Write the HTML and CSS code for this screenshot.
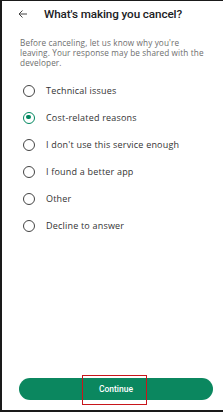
FILE: index.html
```html
<!DOCTYPE html>
<html>
<head>
<meta charset="utf-8">
<link rel="stylesheet" href="styles.css">
</head>
<body>
<div class="screen">
  <div class="header">
    <svg class="back" width="12" height="12" viewBox="0 0 24 24"><path d="M20 12H5M11 5l-7 7 7 7" fill="none" stroke="#444" stroke-width="2"/></svg>
    <div class="title">What's making you cancel?</div>
  </div>
  <p class="desc">Before canceling, let us know why you're leaving. Your response may be shared with the developer.</p>
  <div class="options">
    <div class="opt"><span class="radio"></span><span class="label">Technical issues</span></div>
    <div class="opt"><span class="radio on"></span><span class="label">Cost-related reasons</span></div>
    <div class="opt"><span class="radio"></span><span class="label">I don't use this service enough</span></div>
    <div class="opt"><span class="radio"></span><span class="label">I found a better app</span></div>
    <div class="opt"><span class="radio"></span><span class="label">Other</span></div>
    <div class="opt"><span class="radio"></span><span class="label">Decline to answer</span></div>
  </div>
  <div class="spacer"></div>
  <div class="footer">
    <div class="btn">Continue<span class="mark"></span></div>
  </div>
</div>
</body>
</html>
```
FILE: styles.css
```css
html, body { margin: 0; padding: 0; background: #fff; }
body { font-family: Roboto, "Noto Sans", sans-serif; }
.screen {
  width: 223px; height: 412px; box-sizing: border-box;
  border-top: 1px solid #1a1a1a; border-left: 2px solid #1a1a1a; border-bottom: 2px solid #1a1a1a;
  display: flex; flex-direction: column;
}
.header { display: flex; align-items: center; height: 26px; padding-left: 15px; }
.back { flex: none; }
.title { margin-left: 15px; font-size: 11.7px; font-weight: 500; color: #202124; letter-spacing: -0.1px; }
.desc { margin: 11px 0 0 18px; width: 184px; font-family: "Open Sans", Roboto, sans-serif; font-size: 8.2px; letter-spacing: 0.12px; line-height: 10px; color: #6e6e6e; }
.options { margin-top: 9px; display: flex; flex-direction: column; }
.opt { height: 27px; display: flex; align-items: center; padding-left: 21px; }
.radio { width: 12px; height: 12px; box-sizing: border-box; border: 1.6px solid #444; border-radius: 50%; flex: none; position: relative; }
.radio.on { border-color: #01875f; }
.radio.on::after { content: ""; position: absolute; left: 2px; top: 2px; width: 4.8px; height: 4.8px; border-radius: 50%; background: #01875f; }
.label { margin-left: 11px; font-family: "Open Sans", Roboto, sans-serif; font-size: 9px; letter-spacing: 0.2px; color: #333; }
.spacer { flex: 1; }
.footer { padding: 0 10px 10px 17px; }
.btn {
  position: relative; height: 22px; border-radius: 11px; background: #0b875f;
  color: #fff; font-size: 8.5px; font-weight: 500; display: flex; align-items: center; justify-content: center;
}
.mark { position: absolute; left: 63px; top: -3px; width: 65px; height: 30px; box-sizing: border-box; border: 1.5px solid #c8161b; }
```
